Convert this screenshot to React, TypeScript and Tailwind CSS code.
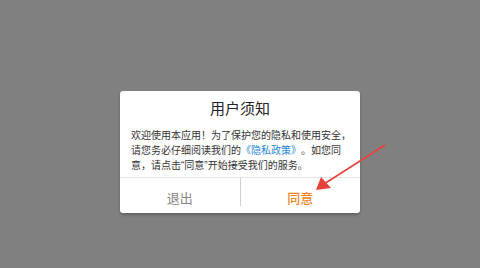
const Arrow = () => (
  <svg
    className="pointer-events-none absolute left-0 top-0"
    width={480}
    height={268}
    viewBox="0 0 480 268"
  >
    <line x1={385} y1={145} x2={324} y2={184} stroke="#e8413b" strokeWidth={1.6} />
    <polygon points="316,190 321,177 331,188" fill="#e8413b" />
  </svg>
);

export default function App() {
  return (
    <div
      className="relative h-[268px] w-[480px] overflow-hidden bg-[#808080] pt-[91px]"
      style={{ fontFamily: '"Noto Sans CJK SC", "Noto Sans", sans-serif' }}
    >
      <div className="mx-auto w-[240px] rounded-[3px] bg-white shadow-[0_2px_3px_rgba(0,0,0,0.25)]">
        <div className="pt-[7px] text-center text-[15px] leading-[20px] text-[#222]">
          用户须知
        </div>
        <div className="mt-[9px] whitespace-nowrap px-[11px] pb-[4px] text-[10px] leading-[15px] text-[#333] [text-spacing-trim:space-all]">
          欢迎使用本应用！为了保护您的隐私和使用安全，
          <br />
          请您务必仔细阅读我们的
          <span className="text-[#2a86d6]">《隐私政策》</span>
          。如您同
          <br />
          意，请点击
          <span className="font-['Liberation_Sans']">“</span>
          同意
          <span className="font-['Liberation_Sans']">”</span>
          开始接受我们的服务。
        </div>
        <div className="flex border-t border-[#e2e2e2] pb-[7px] text-[13px] leading-[16px]">
          <div className="flex-1 border-r border-[#cfcfcf] pt-[12px] text-center text-[#858585]">
            退出
          </div>
          <div className="flex-1 pt-[12px] text-center font-medium text-[#f5841f]">
            同意
          </div>
        </div>
      </div>
      <Arrow />
    </div>
  );
}
